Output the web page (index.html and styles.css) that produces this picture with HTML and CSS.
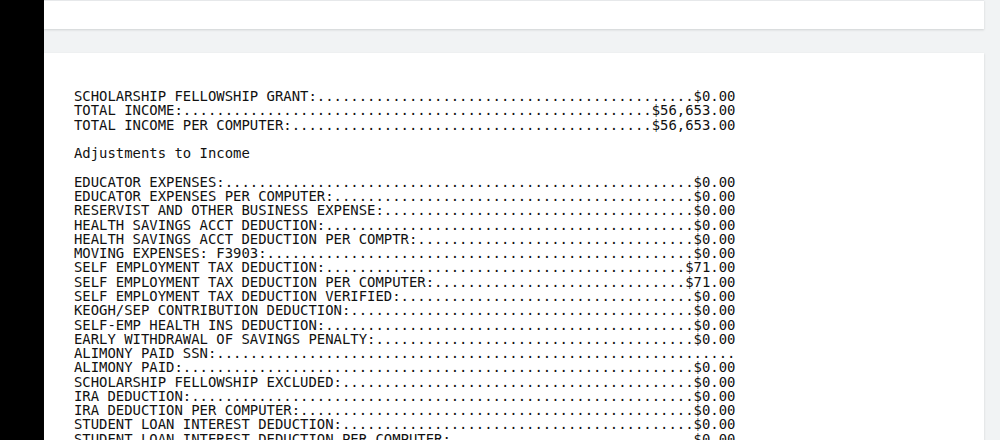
FILE: index.html
```html
<!DOCTYPE html>
<html lang="en">
<head>
    <meta charset="UTF-8">
    <title>Tax Transcript</title>
    <link rel="stylesheet" href="styles.css">
</head>
<body>
<div class="frame">
    <div class="rail"></div>
    <div class="viewer">
        <div class="page page-prev"></div>
        <div class="page">
<pre class="transcript">SCHOLARSHIP FELLOWSHIP GRANT:.............................................$0.00
TOTAL INCOME:........................................................$56,653.00
TOTAL INCOME PER COMPUTER:...........................................$56,653.00

Adjustments to Income

EDUCATOR EXPENSES:........................................................$0.00
EDUCATOR EXPENSES PER COMPUTER:...........................................$0.00
RESERVIST AND OTHER BUSINESS EXPENSE:.....................................$0.00
HEALTH SAVINGS ACCT DEDUCTION:............................................$0.00
HEALTH SAVINGS ACCT DEDUCTION PER COMPTR:.................................$0.00
MOVING EXPENSES: F3903:...................................................$0.00
SELF EMPLOYMENT TAX DEDUCTION:...........................................$71.00
SELF EMPLOYMENT TAX DEDUCTION PER COMPUTER:..............................$71.00
SELF EMPLOYMENT TAX DEDUCTION VERIFIED:...................................$0.00
KEOGH/SEP CONTRIBUTION DEDUCTION:.........................................$0.00
SELF-EMP HEALTH INS DEDUCTION:............................................$0.00
EARLY WITHDRAWAL OF SAVINGS PENALTY:......................................$0.00
ALIMONY PAID SSN:..............................................................
ALIMONY PAID:.............................................................$0.00
SCHOLARSHIP FELLOWSHIP EXCLUDED:..........................................$0.00
IRA DEDUCTION:............................................................$0.00
IRA DEDUCTION PER COMPUTER:...............................................$0.00
STUDENT LOAN INTEREST DEDUCTION:..........................................$0.00
STUDENT LOAN INTEREST DEDUCTION PER COMPUTER:.............................$0.00</pre>
        </div>
    </div>
</div>
</body>
</html>
```

FILE: styles.css
```css
*{
    margin: 0;
    padding: 0;
    box-sizing: border-box;
}
html,body{
    height: 100%;
    overflow: hidden;
}
.frame{
    display: flex;
    height: 100%;
}
.rail{
    width: 44px;
    flex-shrink: 0;
    background-color: #000;
}
.viewer{
    flex: 1;
    background-color: #f1f3f4;
    padding-right: 16px;
    display: flex;
    flex-direction: column;
    gap: 24px;
}
.page{
    background-color: #fff;
    box-shadow: 0 1px 2px rgba(60,64,67,.18);
    padding: 36px 0 0 30px;
    flex: 1;
    overflow: hidden;
}
.page-prev{
    flex: none;
    height: 29px;
    padding: 0;
    border-top: 1px solid #e6e8ea;
}
.transcript{
    font-family: "DejaVu Sans Mono", monospace;
    font-size: 13.92px;
    line-height: 14.28px;
    color: #111;
}
```
